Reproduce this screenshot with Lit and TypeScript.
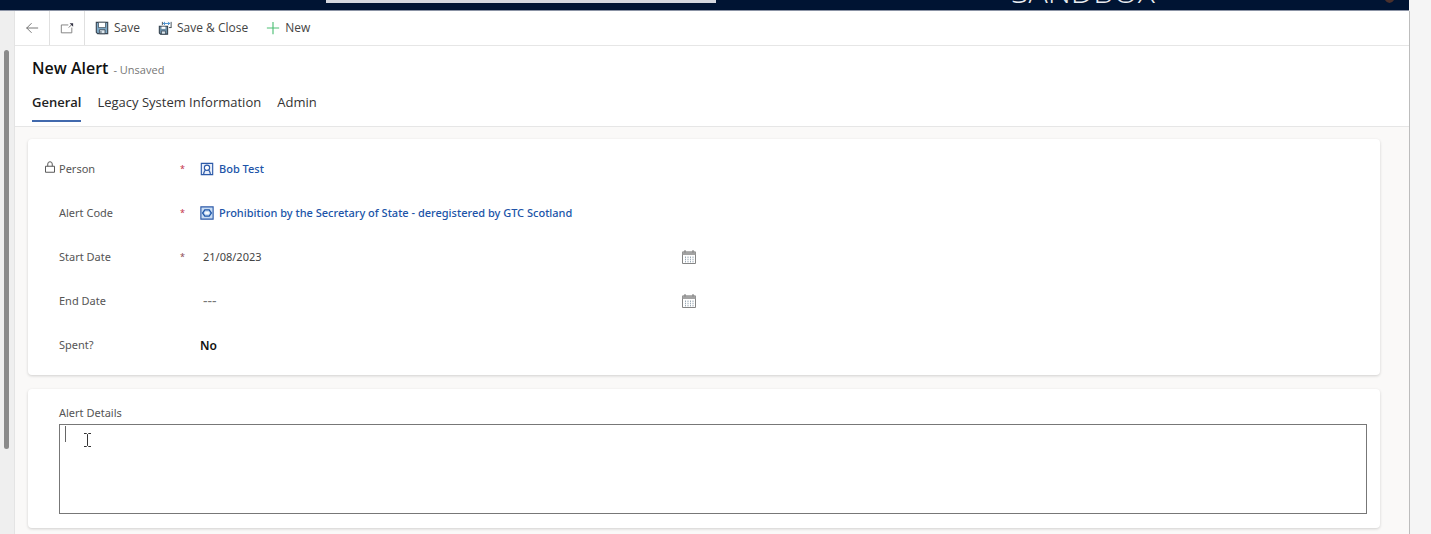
import { LitElement, html, svg, css, nothing, TemplateResult } from 'lit';
import { customElement, property, state } from 'lit/decorators.js';
import { classMap } from 'lit/directives/class-map.js';

const icons: Record<string, TemplateResult> = {
  back: svg`<path d="M15 8H1.500M7.500 2.500 2 8l5.500 5.500" fill="none" stroke="#666"/>`,
  popout: svg`<path d="M9.500 4.500h-8v9h12v-6" fill="none" stroke="#777"/><path d="M10 7.500 14 3.500" fill="none" stroke="#666"/><path d="M11 2.500h4v4z" fill="#334"/>`,
  save: svg`<path d="M1.500 1.500h13v13H3L1.500 13z" fill="#7fabc8" stroke="#3a4652" stroke-width="1.300"/><path d="M4 1.500h8v6H4z" fill="#fff" stroke="#3a4652" stroke-width=".8"/><path d="M5 10h6.500v4.500H5z" fill="#dde8ef" stroke="#3a4652"/><path d="M6.800 11.500v2.500" stroke="#3a4652"/>`,
  saveClose: svg`<path d="M1.500 6h9.500v9H2.800l-1.300-1.300z" fill="#6c8fa8" stroke="#33404c" stroke-width="1.200"/><path d="M4 6.500h4.500V9H4z" fill="#fff"/><path d="M4 11.500h4.500V15H4z" fill="#dde8ef" stroke="#33404c" stroke-width=".8"/><path d="M5 1v3.500M15 1v7M15 7.500h-2.500" fill="none" stroke="#33404c"/><path d="M6 2.800h7.500M8 1 6.200 2.800 8 4.600M11.500 1l1.800 1.800-1.800 1.800" fill="none" stroke="#2f80c8"/>`,
  add: svg`<path d="M8 1v14M1 8h14" fill="none" stroke="#4cbf74" stroke-width="1.300"/>`,
  lock: svg`<path d="M2 7h12v8H2zM5 7V4a3 3 0 0 1 6 0V7" fill="none" stroke="#555" stroke-width="1.300"/>`,
  contact: svg`<path d="M1.500 1.500h13v13h-13z" fill="#e8eefa" stroke="#2c5aa8" stroke-width="1.300"/><circle cx="8" cy="6.500" r="3" fill="#fff" stroke="#2c5aa8" stroke-width="1.300"/><path d="M4 14.500c0-2 .5-3.500 2.200-5.500M12 14.500c0-2-.5-3.500-2.200-5.500" fill="none" stroke="#2c5aa8" stroke-width="1.300"/>`,
  entity: svg`<path d="M1 1h14v14H1z" fill="#c9ddf4" stroke="#2c5aa8" stroke-width="1.300"/><path d="M5 4.500h6M5 11.500h6M5.500 4.500 3 8l2.500 3.500M10.500 4.500 13 8l-2.500 3.500" fill="none" stroke="#1e56a8" stroke-width="1.500"/><path d="M6 7h4v2H6z" fill="#fff"/>`,
  calendar: svg`<path d="M1.500 3h13v11.500h-13z" fill="#fff" stroke="#858585"/><path d="M1.500 2.500h13V6h-13z" fill="#a3a3a3"/><path d="M4 1v2.500M12 1v2.500" stroke="#777"/><path d="M4.500 7.500v6M7 7.500v6M9.500 7.500v6M12 7.500v6" stroke="#9aa9b5" stroke-dasharray="1.500 .7"/>`,
};

@customElement('ui-icon')
class UiIcon extends LitElement {
  @property() name = '';
  static styles = css`
    :host { display: inline-flex; flex: none; width: 14px; height: 14px; }
    svg { width: 100%; height: 100%; }
  `;
  render() {
    return html`<svg viewBox="0 0 16 16" aria-hidden="true">${icons[this.name]}</svg>`;
  }
}

interface Field {
  id: string;
  label: string;
  kind: 'lookup' | 'date' | 'option';
  value: string;
  required?: boolean;
  locked?: boolean;
  icon?: string;
}

const fields: Field[] = [
  { id: 'person', label: 'Person', kind: 'lookup', value: 'Bob Test', required: true, locked: true, icon: 'contact' },
  { id: 'code', label: 'Alert Code', kind: 'lookup', value: 'Prohibition by the Secretary of State - deregistered by GTC Scotland', required: true, icon: 'entity' },
  { id: 'start', label: 'Start Date', kind: 'date', value: '21/08/2023', required: true },
  { id: 'end', label: 'End Date', kind: 'date', value: '' },
  { id: 'spent', label: 'Spent?', kind: 'option', value: 'No' },
];

@customElement('app-root')
class AppRoot extends LitElement {
  @state() private tab = 'General';

  static styles = css`
    :host {
      display: flex;
      flex-direction: column;
      min-height: 100vh;
      background: #f5f5f5;
      color: #222;
      font: 12px/16px "Noto Sans", "Open Sans", sans-serif;
    }
    * { box-sizing: border-box; }
    button, input, select, textarea { font: inherit; color: inherit; }
    button { background: none; border: 0; padding: 0; cursor: pointer; }
    .top {
      display: grid;
      grid-template-columns: 326fr 390fr 295fr 372fr 26fr;
      grid-template-rows: 10px;
      align-items: end;
      height: 11px;
      margin-right: 22px;
      overflow: hidden;
      background: #001433;
      border-bottom: 1px solid #8b93a5;
    }
    .search { grid-column: 2; width: 100%; height: 32px; margin-bottom: 7px; padding: 0; border: 0; background: #d5d8df; }
    .env { grid-column: 4; margin-bottom: 3px; color: #e8ebf0; font: 400 32px/32px "Open Sans", sans-serif; font-weight: 300; }
    .avatar { width: 13px; height: 20px; margin-bottom: 7px; border-radius: 50%; background: #4a302c; }
    .body { display: flex; flex: 1; }
    .gutter { flex: none; width: 15px; padding: 39px 0 0 4px; background: #efefef; border-right: 1px solid #e4e4e4; }
    .thumb { width: 5px; height: 399px; border-radius: 3px; background: #8a8a8a; }
    .page { flex: 1; min-width: 0; margin-right: 21px; border-right: 1px solid #bdbdbd; background: #faf9f8; }
    .commands { display: flex; height: 35px; background: #fff; border-bottom: 1px solid #e6e6e6; font-family: "Open Sans", sans-serif; }
    .square { display: flex; align-items: center; justify-content: center; width: 35px; border-right: 1px solid #e0e0e0; }
    .actions { display: flex; gap: 18px; padding-left: 10px; }
    .action { display: flex; align-items: center; gap: 5px; color: #444; }
    .head { padding: 10px 17px 0; background: #fff; border-bottom: 1px solid #e6e6e6; font-family: "Open Sans", sans-serif; }
    .title { display: flex; align-items: baseline; gap: 5px; }
    h1 { margin: 0; color: #111; font-size: 16px; line-height: 24px; font-weight: 600; }
    .status { color: #767676; font-size: 11px; }
    .tabs { display: flex; gap: 16px; padding-top: 11px; }
    .tab { height: 31px; margin-bottom: 4px; padding-bottom: 8px; border-bottom: 2px solid transparent; color: #333; font-size: 13px; line-height: 16px; }
    .tab.on { border-color: #4169ad; color: #222; font-weight: 600; }
    .content { display: flex; flex-direction: column; gap: 14px; padding: 12px 29px 5px 13px; }
    .card { padding: 8px 13px 8px 31px; border-radius: 4px; background: #fff; box-shadow: 0 1px 3px rgba(0, 0, 0, .17); }
    .row { display: grid; grid-template-columns: 121px 20px 1fr; align-items: center; height: 44px; }
    .label { position: relative; color: #555; font-size: 11px; }
    .lock { position: absolute; left: -15px; top: 0; width: 12px; height: 12px; }
    .star { color: #c4314b; font-size: 9px; }
    .star.done { color: #8c4a55; }
    .lookup { display: flex; align-items: center; gap: 5px; color: #2054a8; text-decoration: none; font-weight: 500; font-size: 11px; }
    .date { display: flex; align-items: center; width: 497px; max-width: 100%; }
    .date input { flex: 1; min-width: 0; padding: 0 0 0 3px; border: 0; background: none; outline: 0; color: #444; font-size: 11px; }
    .date input::placeholder { color: #777; opacity: 1; }
    .date input:placeholder-shown { font-size: 14px; }
    .date button { display: flex; }
    .date ui-icon { width: 16px; height: 16px; }
    select { justify-self: start; padding: 2px 0 0; border: 0; appearance: none; background: none; color: #111; font-size: 12px; font-weight: 600; }
    .details { padding: 16px 13px 14px 31px; }
    .details .label { display: block; margin-bottom: 3px; }
    .editor { position: relative; display: flex; }
    textarea { flex: 1; height: 90px; padding: 4px 6px; border: 1px solid #777; resize: none; background: #fff; outline: 0; }
    .caret { position: absolute; left: 6px; top: 2px; width: 1px; height: 16px; background: #666; }
    .pointer { position: absolute; left: 24px; top: 8px; width: 9px; height: 16px; }
  `;

  private control(f: Field) {
    if (f.kind === 'lookup') {
      return html`<a class="lookup" href="#" aria-describedby=${f.id}><ui-icon name=${f.icon}></ui-icon><span>${f.value}</span></a>`;
    }
    if (f.kind === 'date') {
      return html`<div class="date">
        <input id=${f.id + '-input'} type="text" .value=${f.value} placeholder="---" />
        <button aria-label=${f.label}><ui-icon name="calendar"></ui-icon></button>
      </div>`;
    }
    return html`<select id=${f.id + '-input'}><option selected>No</option><option>Yes</option></select>`;
  }

  render() {
    return html`
      <header class="top">
        <input class="search" type="search" aria-label="Search" />
        <span class="env">SANDBOX</span>
        <span class="avatar"></span>
      </header>
      <div class="body">
        <div class="gutter"><div class="thumb"></div></div>
        <main class="page">
          <div class="commands">
            <button class="square" aria-label="Back"><ui-icon name="back"></ui-icon></button>
            <button class="square" aria-label="Open in new window"><ui-icon name="popout"></ui-icon></button>
            <div class="actions">
              <button class="action"><ui-icon name="save"></ui-icon>Save</button>
              <button class="action"><ui-icon name="saveClose"></ui-icon>Save &amp; Close</button>
              <button class="action"><ui-icon name="add"></ui-icon>New</button>
            </div>
          </div>
          <div class="head">
            <div class="title"><h1>New Alert</h1><span class="status">- Unsaved</span></div>
            <nav class="tabs" role="tablist">
              ${['General', 'Legacy System Information', 'Admin'].map(
                (t) => html`<button role="tab" aria-selected=${t === this.tab} class=${classMap({ tab: true, on: t === this.tab })}
                  @click=${() => (this.tab = t)}>${t}</button>`,
              )}
            </nav>
          </div>
          <div class="content">
            <section class="card">
              ${fields.map(
                (f) => html`<div class="row">
                  <label class="label" id=${f.id} for=${f.id + '-input'}>${f.locked ? html`<ui-icon class="lock" name="lock"></ui-icon>` : nothing}${f.label}</label>
                  <span class=${classMap({ star: true, done: f.kind === 'date' })}>${f.required ? '*' : ''}</span>
                  ${this.control(f)}
                </div>`,
              )}
            </section>
            <section class="card details">
              <label class="label" for="details">Alert Details</label>
              <div class="editor">
                <textarea id="details"></textarea>
                <span class="caret"></span>
                <svg class="pointer" viewBox="0 0 9 16" aria-hidden="true"><path d="M1 1.500h2.500l1 1 1-1H8M4.500 2.500v11M1 14.500h2.500l1-1 1 1H8" fill="none" stroke="#333"/></svg>
              </div>
            </section>
          </div>
        </main>
      </div>
    `;
  }
}
